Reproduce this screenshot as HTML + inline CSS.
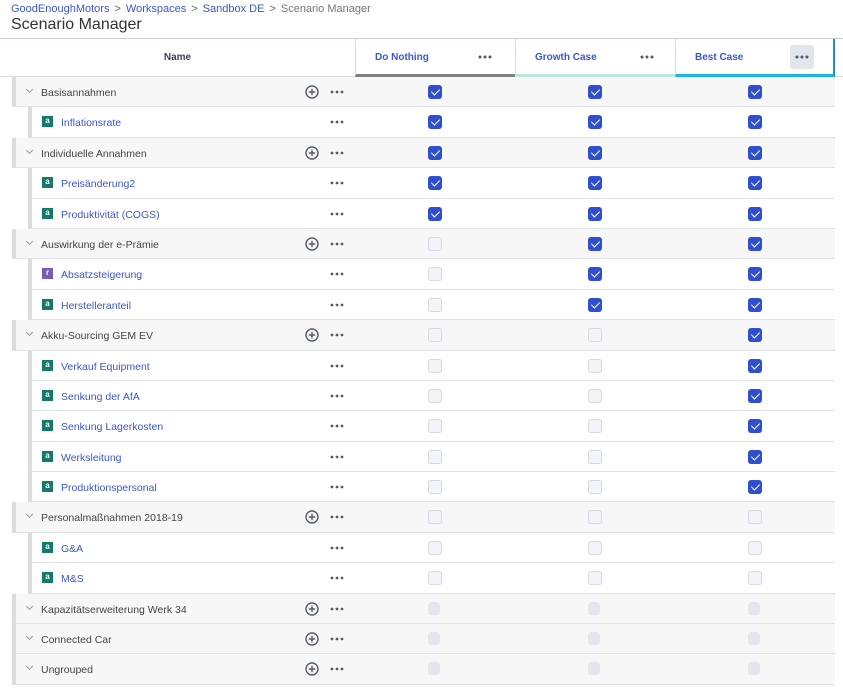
<!DOCTYPE html>
<html><head><meta charset="utf-8"><style>
*{box-sizing:border-box;margin:0;padding:0}
svg{display:block}
body{width:843px;height:693px;background:#fff;font-family:"Liberation Sans",sans-serif;position:relative;overflow:hidden}
.bc{position:absolute;left:11px;top:3px;font-size:11px;color:#3b57d1;white-space:nowrap}
.bc .s{color:#666;margin:0 5px}
.bc .g{color:#777}
.title{position:absolute;left:11px;top:16px;font-size:16px;color:#333}
.hdr{position:absolute;left:0;top:38px;width:843px;height:39px;border-top:1px solid #c9cddb;border-bottom:1px solid #ddd}
.hname{position:absolute;left:0;width:355px;top:0;height:38px;line-height:38px;text-align:center;font-size:10px;font-weight:bold;color:#3a4558}
.hc{position:absolute;top:0;height:38px;border-left:1px solid #dcdde3}
.hc span{position:absolute;left:19px;top:13px;font-size:10px;font-weight:bold;color:#3b57d1}
.hc svg{position:absolute;top:16px}
.rows{position:absolute;left:0;top:77px;width:843px}
.r{position:relative;height:30.4px;border-bottom:1px solid #e2e3e6}
.grp{margin-left:12px;border-left:4px solid #dcdcdc;background:#f7f7f7;width:823px}
.ch{margin-left:28px;border-left:4px solid #dcdcdc;background:#fff;width:807px}
.lbl{position:absolute;top:10px;font-size:10.5px;white-space:nowrap}
.grp .lbl{left:25px;color:#444}
.grp .chev{position:absolute;left:11px;top:10px;width:5px;height:5px;border-right:1px solid #999;border-bottom:1px solid #999;transform:rotate(45deg)}
.ch .lbl{left:29px;color:#3b57d1}
.ic{position:absolute;left:10px;top:9px;width:11px;height:11px;background:#137a6a;color:#fff;font-size:8px;line-height:10px;text-align:center;font-weight:bold}
.ic.p{background:#7b5ab3}
.plus{position:absolute;top:8px}
.dots{position:absolute;top:13px}
.cb{position:absolute;top:8px;width:14px;height:14px;border-radius:3px}
.on{background:#2f4fcf}
.on:after{content:"";position:absolute;left:4.5px;top:2px;width:4px;height:7px;border-right:1.6px solid #fff;border-bottom:1.6px solid #fff;transform:rotate(45deg)}
.off{background:#f3f4f7;border:1px solid #d7d9e2}
.dis{background:#e3e6ec;width:12px;height:13px}
</style></head><body>
<div class="bc">GoodEnoughMotors<span class="s">&gt;</span>Workspaces<span class="s">&gt;</span>Sandbox DE<span class="s">&gt;</span><span class="g">Scenario Manager</span></div>
<div class="title">Scenario Manager</div>
<div class="hdr">
<div class="hname">Name</div>
<div class="hc" style="left:355px;width:160px;border-bottom:3px solid #808080"><span>Do Nothing</span><svg style="left:122px" width="14" height="4"><circle cx="2" cy="2" r="1.5" fill="#556"/><circle cx="7" cy="2" r="1.5" fill="#556"/><circle cx="12" cy="2" r="1.5" fill="#556"/></svg></div>
<div class="hc" style="left:515px;width:160px;border-bottom:3px solid #bfe6dc"><span>Growth Case</span><svg style="left:124px" width="14" height="4"><circle cx="2" cy="2" r="1.5" fill="#556"/><circle cx="7" cy="2" r="1.5" fill="#556"/><circle cx="12" cy="2" r="1.5" fill="#556"/></svg></div>
<div class="hc" style="left:675px;width:160px;border-bottom:3px solid #1fb1ea;border-right:2px solid #1f8be0"><span>Best Case</span><div style="position:absolute;left:114px;top:6px;width:24px;height:24px;background:#e3e5ec;border-radius:3px"></div><svg style="left:119px" width="14" height="4"><circle cx="2" cy="2" r="1.5" fill="#556"/><circle cx="7" cy="2" r="1.5" fill="#556"/><circle cx="12" cy="2" r="1.5" fill="#556"/></svg></div>
</div>
<div class="rows" id="rows"></div>
<script>
var d=[
["g","Basisannahmen",3],["c","Inflationsrate",3,"a"],
["g","Individuelle Annahmen",3],["c","Preisänderung2",3,"a"],["c","Produktivität (COGS)",3,"a"],
["g","Auswirkung der e-Prämie",2],["c","Absatzsteigerung",2,"r"],["c","Herstelleranteil",2,"a"],
["g","Akku-Sourcing GEM EV",1],["c","Verkauf Equipment",1,"a"],["c","Senkung der AfA",1,"a"],["c","Senkung Lagerkosten",1,"a"],["c","Werksleitung",1,"a"],["c","Produktionspersonal",1,"a"],
["g","Personalmaßnahmen 2018-19",0],["c","G&amp;A",0,"a"],["c","M&amp;S",0,"a"],
["g","Kapazitätserweiterung Werk 34",-1],["g","Connected Car",-1],["g","Ungrouped",-1]];
var dots='<svg width="14" height="4"><circle cx="2" cy="2" r="1.4" fill="#555a6a"/><circle cx="7" cy="2" r="1.4" fill="#555a6a"/><circle cx="12" cy="2" r="1.4" fill="#555a6a"/></svg>';
var plus='<svg width="14" height="14"><circle cx="7" cy="7" r="6" fill="none" stroke="#555a6a" stroke-width="1.4"/><path d="M7 3.8V10.2M3.8 7H10.2" stroke="#555a6a" stroke-width="1.4"/></svg>';
var h="";
d.forEach(function(x){
 var g=x[0]=="g",off=g?16:32,s='<div class="r '+(g?'grp':'ch')+'">';
 if(g){s+='<div class="chev"></div><div class="lbl">'+x[1]+'</div><div class="plus" style="left:'+(305-off)+'px">'+plus+'</div>';}
 else{s+='<div class="ic'+(x[3]=="r"?" p":"")+'">'+x[3]+'</div><div class="lbl">'+x[1]+'</div>';}
 s+='<div class="dots" style="left:'+(330-off)+'px">'+dots+'</div>';
 [435,595,755].forEach(function(cx,k){
  var cls;
  if(x[2]<0)cls="dis";else if(3-k<=x[2])cls="on";else cls="off";
  s+='<div class="cb '+cls+'" style="left:'+(cx-7-off)+'px"></div>';
 });
 h+=s+'</div>';
});
document.getElementById("rows").innerHTML=h;
</script>
</body></html>
